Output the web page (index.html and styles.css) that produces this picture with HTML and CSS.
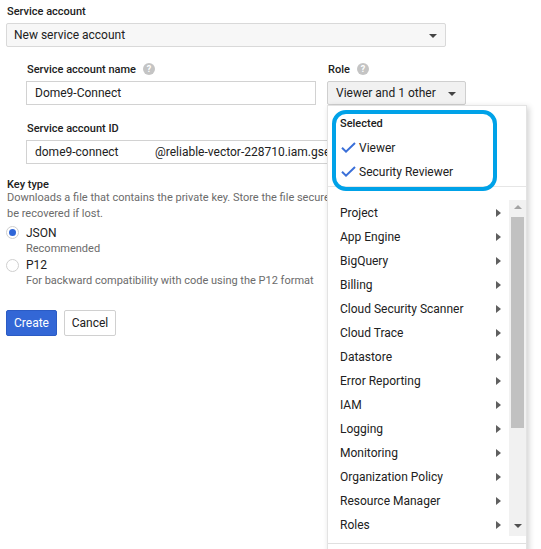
FILE: index.html
```html
<!DOCTYPE html>
<html>
<head>
<meta charset="utf-8">
<link rel="stylesheet" href="styles.css">
</head>
<body>
<div class="page">
  <div class="label">Service account</div>
  <div class="select">New service account<span class="caret"></span></div>

  <div class="indent">
    <div class="row">
      <div class="field name-field">
        <div class="label">Service account name <span class="help">?</span></div>
        <div class="input">Dome9-Connect</div>
      </div>
      <div class="field role-field">
        <div class="label">Role <span class="help">?</span></div>
        <div class="rolebtn">Viewer and 1 other<span class="caret"></span></div>

        <div class="menu">
          <div class="annot"></div>
          <div class="sel-head">Selected</div>
          <div class="sel-item"><svg class="check" width="15" height="11" viewBox="0 0 15 11"><path d="M1 5.8 L5 9.6 L14 1" fill="none" stroke="#3a6fd8" stroke-width="2"/></svg><span>Viewer</span></div>
          <div class="sel-item"><svg class="check" width="15" height="11" viewBox="0 0 15 11"><path d="M1 5.8 L5 9.6 L14 1" fill="none" stroke="#3a6fd8" stroke-width="2"/></svg><span>Security Reviewer</span></div>
          <div class="divider"></div>
          <div class="scroll">
            <ul class="list">
              <li>Project<span class="tri"></span></li>
              <li>App Engine<span class="tri"></span></li>
              <li>BigQuery<span class="tri"></span></li>
              <li>Billing<span class="tri"></span></li>
              <li>Cloud Security Scanner<span class="tri"></span></li>
              <li>Cloud Trace<span class="tri"></span></li>
              <li>Datastore<span class="tri"></span></li>
              <li>Error Reporting<span class="tri"></span></li>
              <li>IAM<span class="tri"></span></li>
              <li>Logging<span class="tri"></span></li>
              <li>Monitoring<span class="tri"></span></li>
              <li>Organization Policy<span class="tri"></span></li>
              <li>Resource Manager<span class="tri"></span></li>
              <li>Roles<span class="tri"></span></li>
            </ul>
            <div class="sbar">
              <span class="sb-up"></span>
              <div class="sb-track"><div class="sb-thumb"></div></div>
              <span class="sb-down"></span>
            </div>
          </div>
          <div class="divider bottom"></div>
        </div>
      </div>
    </div>

    <div class="label id-label">Service account ID</div>
    <div class="input id-input"><span class="id-local">dome9-connect</span><span class="id-domain">@reliable-vector-228710.iam.gserviceaccount.com</span></div>
  </div>

  <div class="label key-label">Key type</div>
  <div class="desc">Downloads a file that contains the private key. Store the file securely because this key can't<br>be recovered if lost.</div>

  <div class="radio-row first"><span class="radio on"></span>JSON</div>
  <div class="sub">Recommended</div>
  <div class="radio-row second"><span class="radio"></span>P12</div>
  <div class="sub">For backward compatibility with code using the P12 format</div>

  <div class="buttons">
    <button class="btn primary">Create</button>
    <button class="btn">Cancel</button>
  </div>
</div>
</body>
</html>
```

FILE: styles.css
```css
* { box-sizing: border-box; }
html, body { margin: 0; padding: 0; background: #fff; }
body {
  font-family: Roboto, "Liberation Sans", Arial, sans-serif;
  color: #212121;
  font-size: 12px;
  overflow: hidden;
  width: 541px;
  height: 549px;
}
.page {
  padding: 3px 0 0 6px;
}
.label {
  font-size: 11px;
  font-weight: 500;
  line-height: 17px;
  height: 16px;
  color: #212121;
  padding-left: 1px;
  display: flex;
  align-items: center;
  white-space: nowrap;
}
.help {
  display: inline-flex;
  align-items: center;
  justify-content: center;
  width: 12px;
  height: 12px;
  border-radius: 50%;
  background: #c4c4c4;
  color: #fff;
  font-size: 9px;
  font-weight: 700;
  margin-left: 7px;
  line-height: 1;
}
.select {
  position: relative;
  margin-top: 4px;
  width: 440px;
  height: 24px;
  border: 1px solid #d9d9d9;
  border-radius: 2px;
  background: #f7f7f7;
  padding-left: 7px;
  line-height: 22px;
  font-size: 12px;
}
.caret {
  position: absolute;
  top: 10px;
  width: 0;
  height: 0;
  border-left: 4px solid transparent;
  border-right: 4px solid transparent;
  border-top: 4px solid #444;
}
.select .caret { right: 8px; }

.indent {
  padding-left: 20px;
  margin-top: 14px;
}
.row {
  display: flex;
  gap: 11px;
}
.field .label { padding-left: 1px; }
.input {
  margin-top: 4px;
  width: 290px;
  height: 24px;
  border: 1px solid #d2d2d2;
  background: #fff;
  padding-left: 8px;
  line-height: 22px;
  font-size: 12px;
  color: #212121;
}
.role-field {
  position: relative;
  z-index: 5;
}
.rolebtn {
  position: relative;
  margin-top: 4px;
  width: 139px;
  height: 24px;
  border: 1px solid #cfcfcf;
  border-radius: 2px;
  background: #f1f1f1;
  padding-left: 8px;
  line-height: 22px;
  font-size: 12px;
  color: #212121;
  white-space: nowrap;
}
.rolebtn .caret { right: 9px; }

.id-label { margin-top: 15px; }
.id-input {
  width: 440px;
  overflow: hidden;
  white-space: nowrap;
  display: flex;
}
.id-local { width: 120px; flex: none; }

.key-label { margin-top: 12px; }
.desc {
  margin-top: -2px;
  font-size: 11px;
  line-height: 16px;
  color: #6b6b6b;
  padding-left: 1px;
  white-space: nowrap;
}
.radio-row {
  display: flex;
  align-items: center;
  height: 16px;
  line-height: 17px;
  font-size: 12px;
  color: #212121;
  position: relative;
  padding-left: 20px;
}
.radio-row.first { margin-top: 3px; }
.radio-row.second { margin-top: 1px; height: 15px; }
.radio {
  position: absolute;
  left: 0;
  top: 1px;
  width: 13px;
  height: 13px;
  border-radius: 50%;
  border: 1px solid #cfcfcf;
  background: #fff;
}
.radio.on::after {
  content: "";
  position: absolute;
  left: 2px;
  top: 2px;
  width: 7px;
  height: 7px;
  border-radius: 50%;
  background: #2f66d8;
}
.sub {
  padding-left: 20px;
  font-size: 11px;
  line-height: 16px;
  color: #6b6b6b;
}
.buttons {
  margin-top: 21px;
  display: flex;
  gap: 7px;
}
.btn {
  width: 52px;
  height: 26px;
  padding: 0;
  font-family: Roboto, "Liberation Sans", Arial, sans-serif;
  font-size: 12px;
  border: 1px solid #d0d0d0;
  border-radius: 2px;
  background: #fff;
  color: #212121;
}
.btn.primary {
  width: 51px;
  background: #3367d6;
  border-color: #2b5bc4;
  color: #fff;
}

/* Dropdown menu */
.menu {
  position: absolute;
  left: 0;
  top: 44px;
  width: 200px;
  height: 460px;
  background: #fff;
  border: 1px solid #e3e3e3;
  box-shadow: 2px 2px 6px rgba(0,0,0,0.18);
  padding-top: 9px;
}
.annot {
  position: absolute;
  left: 4px;
  top: 4px;
  width: 165px;
  height: 81px;
  border: 4px solid #00a2e8;
  border-radius: 14px;
  pointer-events: none;
}
.sel-head {
  font-size: 11px;
  font-weight: 500;
  line-height: 17px;
  height: 16px;
  padding-left: 12px;
  color: #212121;
}
.sel-item {
  height: 24px;
  display: flex;
  align-items: center;
  padding-left: 13px;
  font-size: 12px;
}
.sel-item span { position: relative; top: 1px; }
.sel-head + .sel-item { margin-top: 4px; }
.check { margin-right: 3px; flex: none; }
.divider {
  margin-top: 3px;
  height: 1px;
  background: #e6e6e6;
}
.scroll {
  margin-top: 13px;
  display: flex;
  height: 336px;
}
.list {
  list-style: none;
  margin: 0;
  padding: 0;
  flex: 1;
}
.list li {
  height: 24px;
  line-height: 26px;
  padding-left: 12px;
  font-size: 12px;
  color: #212121;
  position: relative;
}
.tri {
  position: absolute;
  right: 8px;
  top: 9px;
  width: 0;
  height: 0;
  border-top: 4px solid transparent;
  border-bottom: 4px solid transparent;
  border-left: 5px solid #5f5f5f;
}
.sbar {
  width: 17px;
  background: #f1f1f1;
  display: flex;
  flex-direction: column;
  align-items: center;
}
.sb-up {
  margin-top: 5px;
  width: 0;
  height: 0;
  border-left: 4px solid transparent;
  border-right: 4px solid transparent;
  border-bottom: 4px solid #a3a3a3;
}
.sb-track {
  flex: 1;
  width: 100%;
  padding: 8px 2px 0 2px;
}
.sb-thumb {
  height: 211px;
  background: #c1c1c1;
}
.sb-down {
  margin-bottom: 8px;
  width: 0;
  height: 0;
  border-left: 4px solid transparent;
  border-right: 4px solid transparent;
  border-top: 4px solid #505050;
}
.divider.bottom { margin-top: 7px; background: #e0e0e0; }
```
